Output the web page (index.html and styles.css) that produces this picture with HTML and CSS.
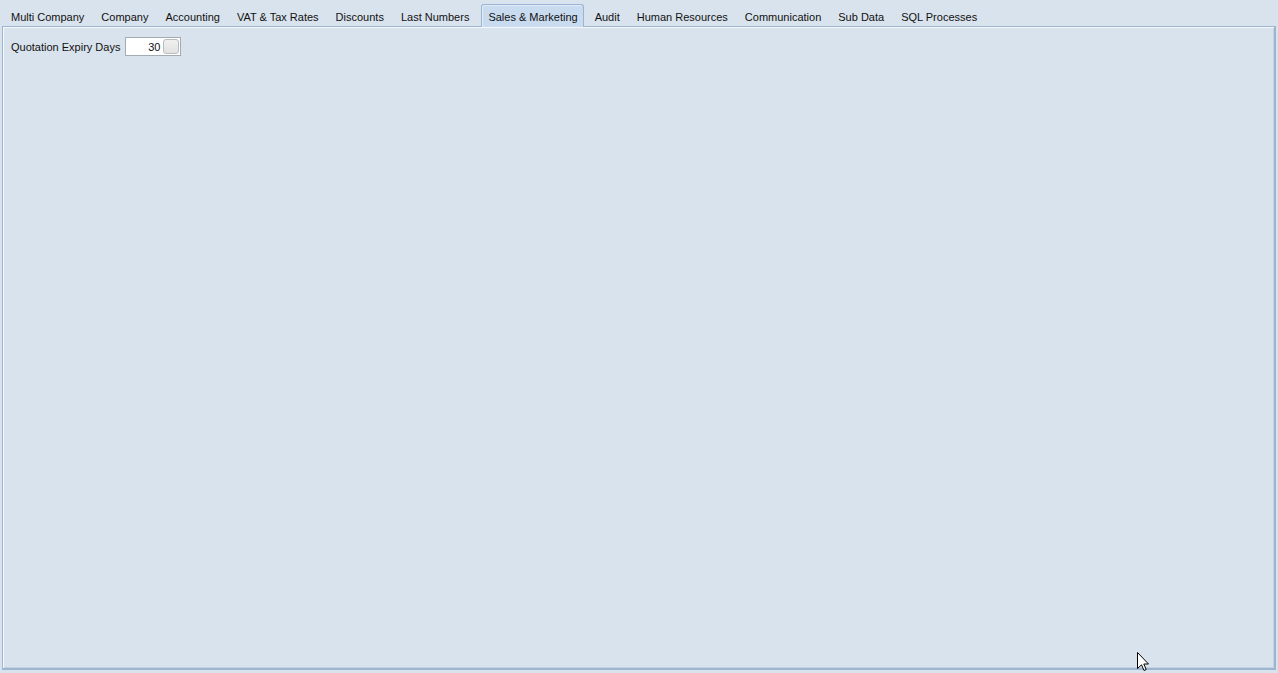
FILE: index.html
```html
<!DOCTYPE html>
<html lang="en">
<head>
  <meta charset="UTF-8">
  <title>Settings</title>
  <link rel="stylesheet" href="styles.css">
</head>
<body>
  <div class="tabs">
    <div class="tab">Multi Company</div>
    <div class="tab">Company</div>
    <div class="tab">Accounting</div>
    <div class="tab">VAT &amp; Tax Rates</div>
    <div class="tab">Discounts</div>
    <div class="tab">Last Numbers</div>
    <div class="tab active">Sales &amp; Marketing</div>
    <div class="tab">Audit</div>
    <div class="tab">Human Resources</div>
    <div class="tab">Communication</div>
    <div class="tab">Sub Data</div>
    <div class="tab">SQL Processes</div>
  </div>

  <div class="panel">
    <div class="field">
      <label class="field-label">Quotation Expiry Days</label>
      <div class="spinner">
        <span class="spinner-value">30</span>
        <span class="spinner-btn"></span>
      </div>
    </div>
  </div>

  <!-- mouse pointer -->
  <svg class="cursor" width="13" height="20" viewBox="0 0 13 20">
    <path d="M0.5 0.5 L0.5 16.5 L4.5 12.8 L7 18.5 L9.2 17.5 L6.8 12 L11.5 12 Z" fill="#fff" stroke="#000" stroke-width="1"/>
  </svg>
</body>
</html>
```

FILE: styles.css
```css
body {
  margin: 0;
  height: 673px;
  background-color: #d9e3ed;
  font-family: "Liberation Sans", Arial, sans-serif;
  font-size: 11px;
  color: #111;
  display: flex;
  flex-direction: column;
  overflow: hidden;
}

/* Sekmeler */
.tabs {
  display: flex;
  align-items: flex-end;
  height: 26px;
  padding-left: 5px;
  gap: 5px;
}

.tab {
  height: 22px;
  line-height: 26px;
  padding: 0 6px;
  white-space: nowrap;
  box-sizing: border-box;
}

.active {
  background-color: #c9dbef;
  border: 1px solid #9ab5d3;
  border-bottom: none;
  border-radius: 3px 3px 0 0;
  line-height: 24px;
  padding: 0 5px 0 6px;
  height: 23px;
  margin-left: 1px;
  margin-bottom: -1px;
  position: relative;
  box-shadow: inset 1px 1px 0 #e2ecf7;
}

.panel {
  height: 644px;
  margin: 0 2px;
  border: 1px solid #9db5cf;
  border-right-width: 2px;
  border-bottom-width: 2px;
  box-shadow: inset 1px 1px 0 #f4f8fc, inset -1px -1px 0 #c3d3e4;
  box-sizing: border-box;
  padding: 10px 8px;
}

.field {
  display: flex;
  align-items: center;
  gap: 5px;
}

.spinner {
  width: 56px;
  height: 19px;
  background: #fff;
  border: 1px solid #a3abb3;
  box-sizing: border-box;
  display: flex;
  align-items: center;
  justify-content: flex-end;
  padding-right: 1px;
}

.spinner-value {
  margin-right: 3px;
}

.spinner-btn {
  width: 16px;
  height: 15px;
  background: linear-gradient(#f0f0f0, #e2e2e2);
  border: 1px solid #bcbcbc;
  border-radius: 3px;
  box-sizing: border-box;
}

.cursor {
  position: absolute;
  left: 1137px;
  top: 652px;
}
```
